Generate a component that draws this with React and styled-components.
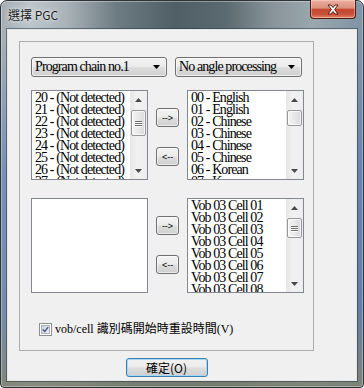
import React from 'react';
import styled, { createGlobalStyle } from 'styled-components';

const GlobalStyle = createGlobalStyle`
  html, body {
    margin: 0;
    padding: 0;
    background: #ffffff;
  }
  body {
    font-family: "Noto Sans CJK TC", "Liberation Sans", sans-serif;
  }
  * {
    box-sizing: border-box;
  }
`;

const Window = styled.div`
  width: 364px;
  height: 388px;
  border: 1px solid #2c3438;
  border-radius: 7px 7px 4px 4px;
  padding: 0 6px 6px 6px;
  display: flex;
  flex-direction: column;
  box-shadow: inset 0 0 0 1px rgba(255, 255, 255, 0.35);
  background:
    linear-gradient(180deg, rgba(0, 0, 0, 0) 0, rgba(0, 0, 0, 0) 34px, rgba(80, 118, 178, 0.55) 45%, rgba(70, 105, 165, 0.5) 80%, rgba(125, 128, 112, 0.85) 100%),
    linear-gradient(90deg, #a3adb3 0%, #bcc5ca 8%, #a9b3b8 18%, #6d7c82 32%, #4f5f65 48%, #5b6a70 62%, #88949a 75%, #9aa7ad 86%, #7f94a6 100%);
`;

const TitleBar = styled.div`
  height: 28px;
  display: flex;
  align-items: flex-start;
  justify-content: space-between;
  padding: 0 1px;
`;

const Title = styled.div`
  margin-top: 6px;
  font-size: 12px;
  line-height: 16px;
  color: #1b1b1b;
  text-shadow: 0 0 6px rgba(255, 255, 255, 0.9), 0 0 2px rgba(255, 255, 255, 0.8);
`;

const CloseButton = styled.div`
  width: 46px;
  height: 19px;
  margin-top: -1px;
  border: 1px solid #4f1a10;
  border-top: none;
  border-radius: 0 0 4px 4px;
  display: flex;
  align-items: center;
  justify-content: center;
  background: linear-gradient(180deg, #e9b0a2 0%, #dc907c 45%, #c5472f 52%, #c9513a 80%, #e08a66 100%);
  box-shadow: inset 0 0 0 1px rgba(255, 220, 210, 0.45);
`;

const Client = styled.div`
  flex: 1;
  background: #f0f0f0;
  border: 1px solid #e4e7e9;
  box-shadow: 0 0 0 1px rgba(45, 55, 60, 0.55);
  padding: 11px 0 0 11px;
  display: flex;
  flex-direction: column;
`;

const GroupBox = styled.div`
  width: 295px;
  height: 310px;
  border: 1px solid #acacac;
  padding: 15px 0 0 11px;
  display: flex;
  flex-direction: column;
`;

const ComboRow = styled.div`
  display: flex;
  gap: 8px;
`;

const serifText = `
  font-family: "Liberation Serif", "Noto Sans CJK TC", serif;
  font-size: 14px;
  letter-spacing: -0.9px;
  color: #000;
`;

const Combo = styled.div`
  width: ${p => p.$width}px;
  height: 20px;
  border: 1px solid #707070;
  border-radius: 3px;
  padding: 0 6px 0 3px;
  display: flex;
  align-items: center;
  justify-content: space-between;
  background: linear-gradient(180deg, #f3f3f3 0%, #ebebeb 48%, #dddddd 52%, #cfcfcf 100%);
  box-shadow: inset 0 0 0 1px rgba(255, 255, 255, 0.6);
  ${serifText}
  line-height: 16px;
  white-space: nowrap;
`;

const ListRow = styled.div`
  display: flex;
  margin-top: ${p => p.$gap}px;
`;

const ListBox = styled.div`
  width: 117px;
  height: ${p => p.$height}px;
  border: 1px solid #828790;
  background: #ffffff;
  display: flex;
`;

const Items = styled.div`
  flex: 1;
  overflow: hidden;
  padding: 1px 0 0 3px;
`;

const Item = styled.div`
  ${serifText}
  line-height: 12px;
  height: 12px;
  white-space: nowrap;
`;

const ScrollBar = styled.div`
  width: 17px;
  display: flex;
  flex-direction: column;
  align-items: center;
  background: linear-gradient(90deg, #e6e6e6 0%, #f1f1f1 40%, #eeeeee 100%);
`;

const ArrowCell = styled.div`
  width: 17px;
  height: 17px;
  display: flex;
  align-items: center;
  justify-content: center;
`;

const Track = styled.div`
  flex: 1;
  width: 17px;
  display: flex;
  justify-content: center;
`;

const Thumb = styled.div`
  width: 15px;
  height: ${p => p.$height}px;
  margin-top: 2px;
  border: 1px solid #979797;
  border-radius: 2px;
  background: linear-gradient(90deg, #f4f4f4 0%, #e8e8e8 50%, #d9d9d9 100%);
  box-shadow: inset 0 0 0 1px rgba(255, 255, 255, 0.7);
  display: flex;
  flex-direction: column;
  align-items: center;
  justify-content: center;
  gap: 1px;
`;

const Grip = styled.div`
  width: 7px;
  height: 1px;
  background: #6b6b6b;
  box-shadow: 0 1px 0 #ffffff;
`;

const MoveColumn = styled.div`
  width: 39px;
  display: flex;
  flex-direction: column;
  align-items: center;
  padding-top: 18px;
  gap: 20px;
`;

const MoveButton = styled.div`
  width: 23px;
  height: 19px;
  border: 1px solid #707070;
  border-radius: 3px;
  display: flex;
  align-items: center;
  justify-content: center;
  background: linear-gradient(180deg, #f3f3f3 0%, #ebebeb 48%, #dddddd 52%, #cfcfcf 100%);
  box-shadow: inset 0 0 0 1px rgba(255, 255, 255, 0.6);
  font-family: "Liberation Sans", sans-serif;
  font-size: 9px;
  color: #000;
`;

const CheckRow = styled.label`
  margin-top: 29px;
  padding-left: 8px;
  display: flex;
  align-items: center;
  gap: 3px;
`;

const CheckBox = styled.div`
  width: 13px;
  height: 13px;
  border: 1px solid #8e8f8f;
  background: #f4f4f4;
  display: flex;
  align-items: center;
  justify-content: center;
  box-shadow: inset 0 0 0 1px #ffffff;
`;

const CheckInner = styled.div`
  width: 9px;
  height: 9px;
  border: 1px solid #aeb3b9;
  background: linear-gradient(135deg, #cbcfd5 0%, #eceef0 100%);
  display: flex;
  align-items: center;
  justify-content: center;
`;

const CheckLabel = styled.span`
  font-family: "Liberation Serif", "Noto Sans CJK TC", serif;
  font-size: 12px;
  line-height: 14px;
  color: #000;
  white-space: nowrap;
`;

const Footer = styled.div`
  width: 295px;
  margin-top: 7px;
  display: flex;
  justify-content: center;
`;

const OkButton = styled.div`
  width: 82px;
  height: 19px;
  border: 1px solid #3c7fb1;
  border-radius: 3px;
  display: flex;
  align-items: center;
  justify-content: center;
  background: linear-gradient(180deg, #f2f2f2 0%, #ebebeb 48%, #dddddd 52%, #cfcfcf 100%);
  box-shadow: inset 0 0 0 1px #a7d7f3;
  font-size: 12px;
  line-height: 14px;
  color: #000;
`;

const DownArrow = ({ color = '#000', w = 7, h = 4 }) => (
  <svg width={w} height={h} viewBox={`0 0 ${w} ${h}`}>
    <polygon points={`0,0 ${w},0 ${w / 2},${h}`} fill={color} />
  </svg>
);

const UpArrow = ({ color = '#000', w = 7, h = 4 }) => (
  <svg width={w} height={h} viewBox={`0 0 ${w} ${h}`}>
    <polygon points={`0,${h} ${w},${h} ${w / 2},0`} fill={color} />
  </svg>
);

const CloseGlyph = () => (
  <svg width="12" height="11" viewBox="0 0 12 11">
    <path
      d="M1 1 L4 1 L6 3.5 L8 1 L11 1 L7.6 5.5 L11 10 L8 10 L6 7.5 L4 10 L1 10 L4.4 5.5 Z"
      fill="#ffffff"
      stroke="#5a1a10"
      strokeWidth="1"
      strokeLinejoin="round"
    />
  </svg>
);

const CheckMark = () => (
  <svg width="9" height="9" viewBox="0 0 9 9">
    <path d="M1 4.5 L3.5 7 L8 1.5" fill="none" stroke="#41598e" strokeWidth="1.8" />
  </svg>
);

function ScrollList({ items, height, thumb, grip }) {
  return (
    <ListBox $height={height}>
      <Items>
        {items.map(t => <Item key={t}>{t}</Item>)}
      </Items>
      <ScrollBar>
        <ArrowCell><UpArrow color="#4a4a4a" /></ArrowCell>
        <Track>
          <Thumb $height={thumb}>
            {grip && <><Grip /><Grip /><Grip /></>}
          </Thumb>
        </Track>
        <ArrowCell><DownArrow color="#4a4a4a" /></ArrowCell>
      </ScrollBar>
    </ListBox>
  );
}

function MoveButtons() {
  return (
    <MoveColumn>
      <MoveButton>--&gt;</MoveButton>
      <MoveButton>&lt;--</MoveButton>
    </MoveColumn>
  );
}

const chains = [20, 21, 22, 23, 24, 25, 26, 27].map(n => `${n} - (Not detected)`);
const langs = [
  '00 - English', '01 - English', '02 - Chinese', '03 - Chinese',
  '04 - Chinese', '05 - Chinese', '06 - Korean', '07 - Korean',
];
const cells = [1, 2, 3, 4, 5, 6, 7, 8].map(n => `Vob 03 Cell 0${n}`);

export default function App() {
  return (
    <>
      <GlobalStyle />
      <Window>
        <TitleBar>
          <Title>選擇 PGC</Title>
          <CloseButton><CloseGlyph /></CloseButton>
        </TitleBar>
        <Client>
          <GroupBox>
            <ComboRow>
              <Combo $width={136}>
                Program chain no.1
                <DownArrow />
              </Combo>
              <Combo $width={127}>
                No angle processing
                <DownArrow />
              </Combo>
            </ComboRow>

            <ListRow $gap={13}>
              <ScrollList items={chains} height={90} thumb={26} grip />
              <MoveButtons />
              <ScrollList items={langs} height={90} thumb={16} />
            </ListRow>

            <ListRow $gap={18}>
              <ListBox $height={95} />
              <MoveButtons />
              <ScrollList items={cells} height={95} thumb={20} grip />
            </ListRow>

            <CheckRow>
              <CheckBox>
                <CheckInner><CheckMark /></CheckInner>
              </CheckBox>
              <CheckLabel>vob/cell 識別碼開始時重設時間(V)</CheckLabel>
            </CheckRow>
          </GroupBox>
          <Footer>
            <OkButton>確定(O)</OkButton>
          </Footer>
        </Client>
      </Window>
    </>
  );
}
